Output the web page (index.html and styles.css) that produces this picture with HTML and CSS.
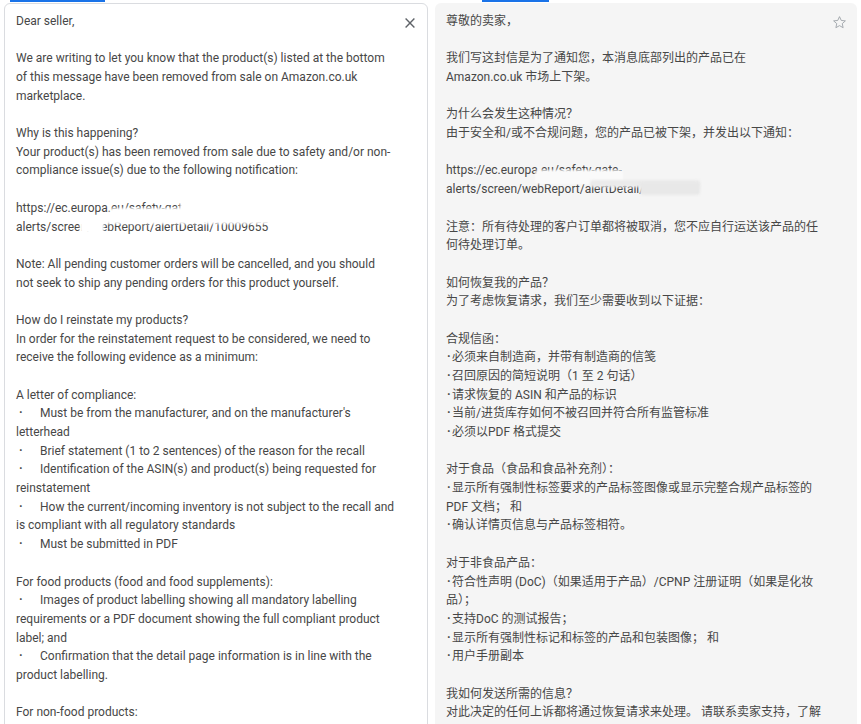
FILE: index.html
```html
<!DOCTYPE html>
<html lang="en">

<head>
    <meta charset="UTF-8">
    <meta name="viewport" content="width=device-width, initial-scale=1.0">
    <title>Seller message - translation</title>
    <link rel="stylesheet" href="styles.css">
</head>

<body>
    <div class="panes">
        <!-- original message -->
        <section class="pane pane-source">
            <div class="tab-line"></div>
            <div class="card">
                <button class="card-icon close-button" title="Clear">
                    <svg viewBox="0 0 10 10" width="10" height="10">
                        <path d="M0.6 0.6L9.4 9.4M9.4 0.6L0.6 9.4" stroke="#5f6368" stroke-width="1.4" fill="none" />
                    </svg>
                </button>

                <p>Dear seller,</p>

                <p>We are writing to let you know that the product(s) listed at the bottom<br>
                    of this message have been removed from sale on Amazon.co.uk<br>
                    marketplace.</p>

                <p>Why is this happening?<br>
                    Your product(s) has been removed from sale due to safety and/or non-<br>
                    compliance issue(s) due to the following notification:</p>

                <p class="url">https://ec.europa.eu/safety-gate-<br>
                    alerts/screen/webReport/alertDetail/10009655
                    <span class="smudge smudge-a"></span>
                    <span class="smudge smudge-b"></span>
                    <span class="smudge smudge-c"></span>
                    <span class="smudge smudge-g"></span>
                </p>

                <p>Note: All pending customer orders will be cancelled, and you should<br>
                    not seek to ship any pending orders for this product yourself.</p>

                <p>How do I reinstate my products?<br>
                    In order for the reinstatement request to be considered, we need to<br>
                    receive the following evidence as a minimum:</p>

                <p>A letter of compliance:<br>
                    <span class="dot">·</span>Must be from the manufacturer, and on the manufacturer's<br>
                    letterhead<br>
                    <span class="dot">·</span>Brief statement (1 to 2 sentences) of the reason for the recall<br>
                    <span class="dot">·</span>Identification of the ASIN(s) and product(s) being requested for<br>
                    reinstatement<br>
                    <span class="dot">·</span>How the current/incoming inventory is not subject to the recall and<br>
                    is compliant with all regulatory standards<br>
                    <span class="dot">·</span>Must be submitted in PDF</p>

                <p>For food products (food and food supplements):<br>
                    <span class="dot">·</span>Images of product labelling showing all mandatory labelling<br>
                    requirements or a PDF document showing the full compliant product<br>
                    label; and<br>
                    <span class="dot">·</span>Confirmation that the detail page information is in line with the<br>
                    product labelling.</p>

                <p>For non-food products:<br>
                    <span class="dot">·</span>Declaration of Conformity (DoC) (if applicable to the product) / CPNP<br>
                    registration proof (if cosmetic);<br>
                    <span class="dot">·</span>Test reports supporting the DoC;<br>
                    <span class="dot">·</span>Product and packaging images showing all mandatory markings and<br>
                    labels; and<br>
                    <span class="dot">·</span>A copy of the user manual</p>
            </div>
        </section>

        <!-- translated message -->
        <section class="pane pane-target">
            <div class="tab-line"></div>
            <div class="card" lang="zh-CN">
                <button class="card-icon star-button" title="Save">
                    <svg viewBox="0 0 24 24" width="15" height="15">
                        <polygon points="12,2.6 14.8,8.7 21.4,9.4 16.4,13.8 17.8,20.3 12,17 6.2,20.3 7.6,13.8 2.6,9.4 9.2,8.7"
                            stroke="#9aa0a6" stroke-width="1.4" stroke-linejoin="round" fill="none" />
                    </svg>
                </button>

                <p>尊敬的卖家，</p>

                <p>我们写这封信是为了通知您，本消息底部列出的产品已在<br>
                    Amazon.co.uk 市场上下架。</p>

                <p>为什么会发生这种情况？<br>
                    由于安全和/或不合规问题，您的产品已被下架，并发出以下通知：</p>

                <p class="url">https://ec.europa.eu/safety-gate-<br>
                    alerts/screen/webReport/alertDetail/10009655
                    <span class="smudge smudge-d"></span>
                    <span class="smudge smudge-e"></span>
                    <span class="smudge smudge-f"></span>
                </p>

                <p>注意：所有待处理的客户订单都将被取消，您不应自行运送该产品的任<br>
                    何待处理订单。</p>

                <p>如何恢复我的产品？<br>
                    为了考虑恢复请求，我们至少需要收到以下证据：</p>

                <p>合规信函：<br>
                    <span class="dot-cn">·</span>必须来自制造商，并带有制造商的信笺<br>
                    <span class="dot-cn">·</span>召回原因的简短说明（1 至 2 句话）<br>
                    <span class="dot-cn">·</span>请求恢复的 ASIN 和产品的标识<br>
                    <span class="dot-cn">·</span>当前/进货库存如何不被召回并符合所有监管标准<br>
                    <span class="dot-cn">·</span>必须以PDF 格式提交</p>

                <p>对于食品（食品和食品补充剂）：<br>
                    <span class="dot-cn">·</span>显示所有强制性标签要求的产品标签图像或显示完整合规产品标签的<br>
                    PDF 文档； 和<br>
                    <span class="dot-cn">·</span>确认详情页信息与产品标签相符。</p>

                <p>对于非食品产品：<br>
                    <span class="dot-cn">·</span>符合性声明 (DoC)（如果适用于产品）/CPNP 注册证明（如果是化妆<br>
                    品）；<br>
                    <span class="dot-cn">·</span>支持DoC 的测试报告；<br>
                    <span class="dot-cn">·</span>显示所有强制性标记和标签的产品和包装图像； 和<br>
                    <span class="dot-cn">·</span>用户手册副本</p>

                <p>我如何发送所需的信息？<br>
                    对此决定的任何上诉都将通过恢复请求来处理。 请联系卖家支持，了解<br>
                    如何提交恢复请求以及需要提供的信息。</p>
            </div>
        </section>
    </div>
</body>

</html>
```

FILE: styles.css
```css
* {
    margin: 0;
    padding: 0;
    box-sizing: border-box;
}

body {
    background: #fff;
    font-family: Roboto, "Noto Sans CJK SC", sans-serif;
    font-size: 12px;
    line-height: 18.68px;
    color: #474747;
}

.panes {
    display: flex;
    gap: 7px;
    padding: 0 4px;
    height: 100vh;
    overflow: hidden;
}

.pane {
    flex: none;
}

.pane-source {
    width: 424px;
}

.pane-target {
    width: 422px;
}

/* active tab underline above each pane */
.tab-line {
    height: 2px;
    margin-bottom: 1px;
    background-color: #1a73e8;
}

.pane-source .tab-line {
    width: 95px;
    margin-left: 6px;
}

.pane-target .tab-line {
    width: 67px;
    margin-left: 47px;
}

.card {
    position: relative;
    border-radius: 6px;
}

.pane-source .card {
    border: 1px solid #dadce0;
    background: #fff;
    padding: 8px 11px 20px 11px;
}

.pane-target .card {
    background: #f5f5f5;
    padding: 9px 20px 20px 11px;
}

.card p {
    margin-bottom: 18.68px;
}

.card-icon {
    position: absolute;
    background: none;
    border: none;
    cursor: pointer;
    display: flex;
    align-items: center;
    justify-content: center;
}

.close-button {
    top: 14px;
    right: 12px;
}

.close-button svg {
    display: block;
}

.star-button {
    top: 12px;
    right: 10px;
}

.star-button svg {
    display: block;
}

.dot {
    display: inline-block;
    width: 24px;
    padding-left: 3px;
    font-weight: bold;
}

.dot-cn {
    display: inline-block;
    width: 6px;
    padding-left: 1px;
    font-weight: bold;
}

/* blurred-out part of the notification link */
.url {
    position: relative;
}

.smudge {
    position: absolute;
    border-radius: 3px;
    filter: blur(1px);
}

.smudge-a {
    left: 94px;
    top: 9px;
    width: 92px;
    height: 14px;
    background: #fff;
}

.smudge-b {
    left: 64px;
    top: 16px;
    width: 24px;
    height: 18px;
    background: #fff;
}

.smudge-c {
    left: 88px;
    top: 18px;
    width: 176px;
    height: 7px;
    background: rgba(255, 255, 255, 0.95);
}

.smudge-g {
    left: 164px;
    top: 1px;
    width: 22px;
    height: 20px;
    background: #fff;
}

.smudge-d {
    left: 89px;
    top: 9px;
    width: 88px;
    height: 14px;
    background: #fafafa;
}

.smudge-e {
    left: 144px;
    top: 19px;
    width: 110px;
    height: 7px;
    background: #ebebeb;
}

.smudge-f {
    left: 194px;
    top: 21px;
    width: 60px;
    height: 13px;
    background: #e8e8e8;
}
```
